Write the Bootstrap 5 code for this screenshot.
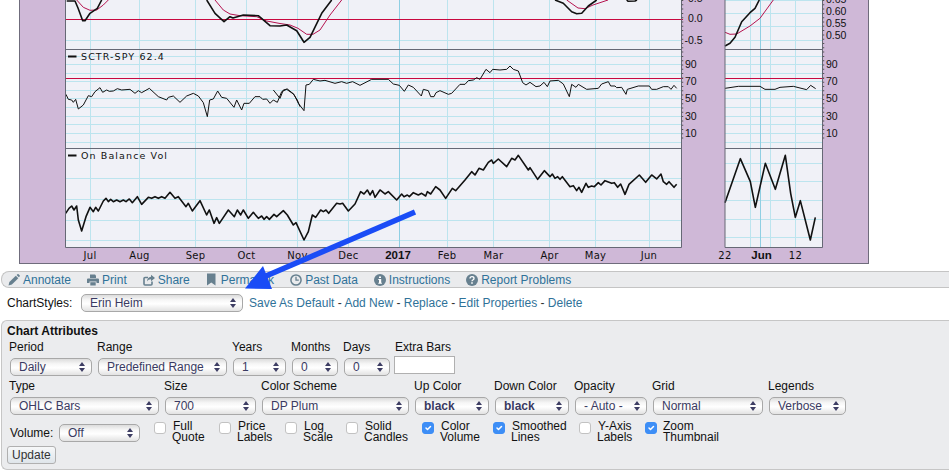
<!DOCTYPE html>
<html lang="en">
<head>
<meta charset="utf-8">
<title>Chart</title>
<link href="https://cdn.jsdelivr.net/npm/bootstrap@5.3.0/dist/css/bootstrap.min.css" rel="stylesheet">
<style>
html,body{height:472px;overflow:hidden;background:#fff}
body{font-family:"Liberation Sans",Arial,sans-serif;font-size:12px;line-height:14px;color:#111;position:relative}
.chartpic{display:block}
.chartpic text{font-family:"Liberation Sans",Arial,sans-serif;font-size:10.5px;fill:#111}
.chartpic text.wide{font-family:"DejaVu Sans",sans-serif;font-size:10px;letter-spacing:.3px}
.chartpic text.leg{font-family:"DejaVu Sans",sans-serif;font-size:9.5px;letter-spacing:1.1px}
.chartpic text.strong{font-family:"Liberation Sans",sans-serif;font-size:11.5px;font-weight:700}
.grid{stroke:#bce4ee;stroke-width:1;fill:none}
.gridd{stroke:#8fcfe3;stroke-width:1;fill:none}
.edge{stroke:#666875;stroke-width:1;fill:none}
.ln{fill:none;stroke:#111;stroke-linejoin:round;vector-effect:non-scaling-stroke}
.ln1{stroke-width:1}
.ln2{stroke-width:1.6}
.rd{fill:none;stroke:#b5134f;stroke-width:1;vector-effect:non-scaling-stroke}
.toolstrip{margin-top:7px;height:17px;margin-left:1px;border:1px solid #c4c4c4;border-right:0;border-radius:8px 0 0 8px;background:#eaebed;padding-left:6px;gap:16px}
.toolstrip a,.linkrow a{color:#2f7299;text-decoration:none}
.toolitem{gap:3px}
.toolitem svg{display:block;flex:none}
.toolitem .marksvg{margin-right:1px}
.stylesrow{margin-top:5px;height:20px;padding-left:7px}
.stylesrow label{width:73px}
.linkrow{margin-left:6px;color:#333}
.attrs{margin:7px 0 0 1px;height:150px;border:1px solid #c6c6c6;border-right:0;border-radius:6px 0 0 6px;background:#ebecee;padding:3px 0 0 5px}
.attrs h6{font-family:inherit;font-size:12px;line-height:14px;font-weight:700;margin:0 0 2px 0;color:#111}
.fieldrow{padding-left:2px}
.fieldrow.second{margin-top:3px}
.fieldrow .fld{display:flex;flex-direction:column}
.fld label{height:14px;margin-bottom:4px}
.fld.extra label{margin-bottom:2px}
.pickwrap{position:relative;display:block;margin-left:1px}
.pickwrap::before,.pickwrap::after{content:"";position:absolute;right:7px;border-left:3px solid transparent;border-right:3px solid transparent;pointer-events:none}
.pickwrap::before{top:4px;border-bottom:4px solid #3d3d63}
.pickwrap::after{top:10px;border-top:4px solid #3d3d63}
.form-select.pick{display:block;font-family:inherit;font-size:12px;line-height:14px;height:18px;min-height:0;padding:1px 14px 1px 8px;color:#3a3a62;border:1px solid #a8a8a8;border-radius:5px;box-shadow:none;background-color:#f4f4f4;background-image:linear-gradient(#dcdcdc,#f6f6f6 30%,#ffffff 55%,#e2e2e2);background-size:auto;background-position:0 0}
.form-select.pick.heavy{font-weight:700}
.form-control.barsbox{width:61px;height:18px;min-height:0;padding:0 2px;font-size:12px;border:1px solid #b0b0b0;border-radius:0;background:#fff;margin-left:-1px}
.wd88{width:88px}.wd135{width:135px}.wd59{width:59px}.wd52{width:52px}
.wd155{width:155px}.wd97{width:97px}.wd153{width:153px}.wd80{width:80px}.wd78{width:78px}.wd116{width:116px}
.sw82{width:82px}.sw129{width:129px}.sw53{width:53px}.sw46{width:46px}.sw149{width:149px}.sw91{width:91px}.sw147{width:147px}.sw74{width:74px}.sw72{width:72px}.sw110{width:110px}.sw77{width:77px}.sw81{width:81px}.sw162{width:162px}
.thirdrow{margin-top:5px;height:26px;padding-left:3px;color:#111}
.vollabel{width:47px;margin-top:6px}
.volwrap{margin:4px 0 0 1px;width:96px}
.vw65{width:65px}.vw66{width:66px}.vw61{width:61px}.vw76{width:76px}.vw71{width:71px}.vw86{width:86px}
.form-check-input.tick{width:12px;height:12px;margin:2px 6px 0 0;border:1px solid #c2c2c2;border-radius:3px;flex:none;float:none}
.form-check-input.tick:checked{background-color:#3d8ef6;border-color:#3d8ef6}
.ticktext{margin-top:1px;display:block;white-space:nowrap}
.ticktext span{display:block;line-height:11px}
.ticktext .firstline{padding-left:1px}
.btn.updatebtn{display:block;font-size:12px;line-height:13px;height:18px;padding:1px 4px;margin:0;color:#333;border:1px solid #b0b0b0;border-radius:3px;background:linear-gradient(#f7f8f9,#dfe5ea)}
.arrowover{position:absolute;left:0;top:0;pointer-events:none}
</style>
</head>
<body>
<svg class="chartpic" width="949" height="264" viewBox="0 0 949 264" xmlns="http://www.w3.org/2000/svg">
  <rect x="19.5" y="-5" width="849" height="268.5" fill="#cfb8d7" stroke="#6f6c7c"/>
  <rect x="65.5" y="-5" width="616" height="252.5" fill="#f0f1f7"/>
  <rect x="725" y="-5" width="97" height="252.5" fill="#f0f1f7"/>
  <path class="grid" d="M66 40.5H681M66 56.5H681M66 64.5H681M66 73.5H681M66 81.5H681M66 90.5H681M66 98.5H681M66 107.5H681M66 116.5H681M66 124.5H681M66 133.5H681M66 142.5H681M66 178.5H681M66 199.5H681M66 220.5H681M66 240.5H681"/>
  <path class="grid" d="M725 0.5H822M725 13.5H822M725 26.5H822M725 40.5H822M725 56.5H822M725 64.5H822M725 73.5H822M725 81.5H822M725 90.5H822M725 98.5H822M725 107.5H822M725 116.5H822M725 124.5H822M725 133.5H822M725 142.5H822M725 163.5H822M725 181.5H822M725 200.5H822M725 219.5H822M725 237.5H822"/>
  <path class="grid" d="M90.5 0V247M139.5 0V247M195.5 0V247M246.5 0V247M297.5 0V247M348.5 0V247M447.5 0V247M493.5 0V247M549.5 0V247M595.5 0V247M649.5 0V247M750.5 0V247M770.5 0V247M795.5 0V247"/>
  <path class="gridd" d="M399.5 0V247M760.5 0V247"/>
  <path d="M66 19.5H683M66 78.5H683M725 78.5H824" stroke="#c8083f" fill="none"/>
  <polyline class="rd" points="76.7,0 83.3,7.3 90,10.3 96.7,10 103.3,5 108.3,0"/>
  <polyline class="rd" points="215,0 223.3,10 230,14 240,15.7 256.7,16.7 266.7,21 280,23.5 290,25 298,28.3 306.7,34.3 313,34.3 320,30 330,15 341.7,0"/>
  <polyline class="rd" points="566.7,0 578,8 585,8.7 593,5 608,0"/>
  <polyline class="rd" points="725,32.3 730,34.3 736.7,34 750,26 760,18.3 773.3,0"/>
  <polyline class="ln ln2" points="66.7,1 75,1 78,8 82.7,20.7 85,20.7 90,13.3 97.3,8.3 101.7,0"/>
  <polyline class="ln ln2" points="206.7,0 215,13.3 224,21.7 230,16.7 233,18 243.3,15 258.3,15.7 270,25.7 280,26 286.7,25 296.7,30.7 304,42.3 310,37.3 321.7,13.3 331.7,0"/>
  <polyline class="ln ln2" points="555,0 563.3,3.3 571.7,11.7 576.7,13.7 581.7,13.3 588.3,6 596.7,0"/>
  <polyline class="ln ln2" points="626.7,0 628,1.3 635,1 637,0"/>
  <polyline class="ln ln2" points="725,46 730,43.3 735,37.3 741.7,21.7 750,12.7 755,8.3 759.3,0"/>
  <g transform="translate(60 0) scale(.33333)"><polyline class="ln ln1" points="18,283 25,298 35,300 40,307 47,298 55,327 70,315 85,287 95,290 105,275 120,263 128,277 140,270 148,274 160,273 172,266 185,270 210,268 225,280 235,272 245,278 268,265 295,290 320,300 325,292 340,288 360,307 380,288 400,280 415,288 430,308 442,350 449,300 460,297 473,273 485,292 500,295 522,322 530,300 545,330 552,310 568,310 585,290 600,290 608,298 620,297 630,310 640,300 652,307 665,275 680,268 700,282 712,300 720,320"/></g>
  <g transform="translate(280 0) scale(.33333)"><polyline class="ln ln1" points="-20,270 0,295 10,270 22,267 42,283 55,310 72,332 78,255 88,253 100,238 120,243 135,241 165,250 185,245 200,250 218,245 240,256 275,238 325,238 340,252 358,256 373,274 385,255 400,262 424,288 430,268 445,272 452,290 462,290 468,278 480,272 505,283 515,280 540,253 555,253 565,242 580,240 590,233 600,238 618,208 630,218 638,208 660,210"/></g>
  <g transform="translate(500 0) scale(.33333)"><polyline class="ln ln1" points="0,210 20,208 30,198 40,208 55,213 68,248 78,255 90,247 108,260 120,258 132,247 142,260 150,243 175,241 190,252 208,290 215,253 228,262 235,253 260,268 295,265 305,252 325,245 332,258 345,258 350,263 365,262 378,283 382,268 415,258 448,258 455,268 470,268 490,260 505,260 513,268 522,256 530,265"/></g>
  <g transform="translate(475 0) scale(.33333)"><polyline class="ln ln1" points="750,265 790,259 855,259 870,268 900,268 915,262 955,259 995,269 1007,256 1022,266"/></g>
  <g transform="scale(.33333)"><polyline class="ln ln2" points="197,640 207,625 215,618 222,630 230,618 235,660 245,693 258,650 270,622 280,635 287,622 295,633 310,603 318,595 325,605 332,598 340,605 350,600 360,605 370,600 378,605 388,597 397,608 412,590 425,613 445,592 455,595 465,590 475,595 485,590 495,595 510,577 525,595 535,590 558,620 565,610 577,633 600,602 620,645 628,630 642,670 650,653 658,670 685,630 703,650 712,630 722,645 730,630 745,655 760,637 775,655 785,648 792,658 800,650 808,658 822,643 830,650 850,632 862,645 880,675 888,668 912,720 925,695 937,645 947,652 962,630 970,635 978,630 986,640 1010,610 1020,612 1028,610 1045,633 1065,612 1082,575 1092,582 1102,570 1110,585 1118,572 1125,592 1140,570 1155,582 1165,575 1190,600 1205,582 1212,590 1222,585 1228,590 1240,578 1255,585 1265,580 1277,588 1282,575 1292,582 1307,560 1320,570 1337,595 1357,565 1367,572 1395,540 1415,515 1425,525 1437,505 1450,510 1465,487 1475,480 1480,490 1495,477 1520,500 1535,475 1545,480 1555,466 1585,510 1590,503 1613,538 1633,512 1650,530 1657,522 1665,535 1673,530 1680,538 1687,530 1710,560 1720,557 1730,572 1737,562 1745,577 1758,550 1765,562 1775,558 1783,560 1795,548 1803,555 1815,542 1835,550 1843,548 1853,562 1862,552 1875,583 1887,553 1918,525 1937,547 1955,525 1970,537 1983,522 1990,545 2000,553 2007,545 2022,562 2030,553"/></g>
  <g transform="translate(475 0) scale(.33333)"><polyline class="ln ln2" points="750,608 796,476 826,545 841,622 871,490 901,568 931,466 947,580 961,652 976,602 1006,720 1021,652"/></g>
  <path class="edge" d="M65.5 -5V247.5H681.5V-5M65 49.5H682M65 148.5H682M725 -5V247.5H822.5V-5M725 49.5H822.5M725 148.5H822.5"/>
  <path d="M682.5 0V142M823.5 0V142" stroke="#555" stroke-width="1.5" stroke-dasharray="1 3.3" fill="none"/>
  <path d="M68 56.5H76.5M68 155.5H76.5" stroke="#111" stroke-width="2"/>
  <text class="leg" x="81" y="60">SCTR-SPY 62.4</text>
  <text class="leg" x="81" y="159">On Balance Vol</text>
  <text x="688" y="2">0.5</text><text x="688" y="22">0.0</text><text x="684.5" y="43.5">-0.5</text>
  <text x="685" y="68">90</text><text x="685" y="85">70</text><text x="685" y="102">50</text><text x="685" y="119.5">30</text><text x="685" y="136.5">10</text>
  <text x="826" y="3">0.65</text><text x="826" y="15">0.60</text><text x="826" y="27">0.55</text><text x="826" y="39">0.50</text>
  <text x="826" y="68">90</text><text x="826" y="85">70</text><text x="826" y="102">50</text><text x="826" y="119.5">30</text><text x="826" y="136.5">10</text>
  <g text-anchor="middle">
    <text class="wide" x="90" y="259">Jul</text><text class="wide" x="139.5" y="259">Aug</text><text class="wide" x="195.5" y="259">Sep</text><text class="wide" x="246.5" y="259">Oct</text><text class="wide" x="297.5" y="259">Nov</text><text class="wide" x="348.5" y="259">Dec</text>
    <text class="strong" x="398" y="259">2017</text>
    <text class="wide" x="447" y="259">Feb</text><text class="wide" x="493.5" y="259">Mar</text><text class="wide" x="549.5" y="259">Apr</text><text class="wide" x="595.5" y="259">May</text><text class="wide" x="649" y="259">Jun</text>
    <text class="wide" x="725" y="259">22</text><text class="strong" x="761.5" y="259">Jun</text><text class="wide" x="795.5" y="259">12</text>
  </g>
</svg>

<nav class="toolstrip d-flex align-items-center">
  <a class="toolitem d-flex align-items-center" href="#"><svg width="12" height="12" viewBox="0 0 12 12"><path d="M0.5 11.500l.9-3.400 6.400-6.400 2.500 2.500-6.400 6.400z" fill="#67808f"/><path d="M8.600 1l.8-.7a.9.9 0 0 1 1.200 0l1 1a.9.9 0 0 1 0 1.200l-.8.8z" fill="#67808f"/></svg><span>Annotate</span></a>
  <a class="toolitem d-flex align-items-center" href="#"><svg width="12" height="12" viewBox="0 0 12 12"><path d="M3 .5h5l1 1V4H3z" fill="#67808f"/><path d="M0 5.500q0-1 1-1h10q1 0 1 1V9H9.500V7.500h-7V9H0z" fill="#67808f"/><path d="M3.300 8.200h5.400v3.300H3.300z" fill="#67808f"/></svg><span>Print</span></a>
  <a class="toolitem d-flex align-items-center" href="#"><svg width="12" height="12" viewBox="0 0 12 12"><path d="M9 7.500V10q0 1-1 1H2q-1 0-1-1V4.500q0-1 1-1h3" fill="none" stroke="#67808f" stroke-width="1.600"/><path d="M8 .8L12 4 8 7.300V5.200C6 5.200 5 6 4 7.500 4 5 5.500 3 8 2.800z" fill="#67808f"/></svg><span>Share</span></a>
  <a class="toolitem d-flex align-items-center" href="#"><svg class="marksvg" width="11" height="13" viewBox="0 0 11 13"><path d="M1 .5h8.500V12.500L5.250 9.500 1 12.500z" fill="#67808f"/></svg><span>Permalink</span></a>
  <a class="toolitem d-flex align-items-center" href="#"><svg width="12" height="12" viewBox="0 0 12 12"><circle cx="6" cy="6" r="5.100" fill="none" stroke="#67808f" stroke-width="1.500"/><path d="M6 2.800V6.200H8.800" fill="none" stroke="#67808f" stroke-width="1.300"/></svg><span>Past Data</span></a>
  <a class="toolitem d-flex align-items-center" href="#"><svg width="12" height="12" viewBox="0 0 12 12"><circle cx="6" cy="6" r="6" fill="#67808f"/><path d="M5 2.400h2v1.700H5zM4.300 5h2.900v3.800h.7v1H4.300v-1H5V6H4.300z" fill="#fff"/></svg><span>Instructions</span></a>
  <a class="toolitem d-flex align-items-center" href="#"><svg width="12" height="12" viewBox="0 0 12 12"><circle cx="6" cy="6" r="6" fill="#67808f"/><path d="M4 4.600Q4 2.700 6 2.700T8 4.400Q8 5.400 6.800 6 6 6.400 6 7.300" fill="none" stroke="#fff" stroke-width="1.300"/><path d="M5.200 8.300h1.600v1.500H5.200z" fill="#fff"/></svg><span>Report Problems</span></a>
</nav>

<div class="stylesrow d-flex align-items-center">
  <label for="styleSel">ChartStyles:</label>
  <span class="pickwrap sw162"><select id="styleSel" class="form-select pick"><option>Erin Heim</option></select></span>
  <span class="linkrow"><a href="#">Save As Default</a> - <a href="#">Add New</a> - <a href="#">Replace</a> - <a href="#">Edit Properties</a> - <a href="#">Delete</a></span>
</div>

<form class="attrs">
  <h6>Chart Attributes</h6>
  <div class="fieldrow d-flex">
    <div class="fld wd88"><label>Period</label><span class="pickwrap sw82"><select class="form-select pick"><option>Daily</option></select></span></div>
    <div class="fld wd135"><label>Range</label><span class="pickwrap sw129"><select class="form-select pick"><option>Predefined Range</option></select></span></div>
    <div class="fld wd59"><label>Years</label><span class="pickwrap sw53"><select class="form-select pick"><option>1</option></select></span></div>
    <div class="fld wd52"><label>Months</label><span class="pickwrap sw46"><select class="form-select pick"><option>0</option></select></span></div>
    <div class="fld wd52"><label>Days</label><span class="pickwrap sw46"><select class="form-select pick"><option>0</option></select></span></div>
    <div class="fld extra"><label>Extra Bars</label><input class="form-control barsbox" type="text"></div>
  </div>
  <div class="fieldrow second d-flex">
    <div class="fld wd155"><label>Type</label><span class="pickwrap sw149"><select class="form-select pick"><option>OHLC Bars</option></select></span></div>
    <div class="fld wd97"><label>Size</label><span class="pickwrap sw91"><select class="form-select pick"><option>700</option></select></span></div>
    <div class="fld wd153"><label>Color Scheme</label><span class="pickwrap sw147"><select class="form-select pick"><option>DP Plum</option></select></span></div>
    <div class="fld wd80"><label>Up Color</label><span class="pickwrap sw74"><select class="form-select pick heavy"><option>black</option></select></span></div>
    <div class="fld wd80"><label>Down Color</label><span class="pickwrap sw74"><select class="form-select pick heavy"><option>black</option></select></span></div>
    <div class="fld wd78"><label>Opacity</label><span class="pickwrap sw72"><select class="form-select pick"><option>- Auto -</option></select></span></div>
    <div class="fld wd116"><label>Grid</label><span class="pickwrap sw110"><select class="form-select pick"><option>Normal</option></select></span></div>
    <div class="fld"><label>Legends</label><span class="pickwrap sw77"><select class="form-select pick"><option>Verbose</option></select></span></div>
  </div>
  <div class="thirdrow d-flex">
    <label class="vollabel">Volume:</label>
    <span class="volwrap"><span class="pickwrap sw81"><select class="form-select pick"><option>Off</option></select></span></span>
    <div class="vw65 d-flex"><input class="form-check-input tick" type="checkbox"><span class="ticktext"><span class="firstline">Full</span><span>Quote</span></span></div>
    <div class="vw66 d-flex"><input class="form-check-input tick" type="checkbox"><span class="ticktext"><span class="firstline">Price</span><span>Labels</span></span></div>
    <div class="vw61 d-flex"><input class="form-check-input tick" type="checkbox"><span class="ticktext"><span class="firstline">Log</span><span>Scale</span></span></div>
    <div class="vw76 d-flex"><input class="form-check-input tick" type="checkbox"><span class="ticktext"><span class="firstline">Solid</span><span>Candles</span></span></div>
    <div class="vw71 d-flex"><input class="form-check-input tick" type="checkbox" checked><span class="ticktext"><span class="firstline">Color</span><span>Volume</span></span></div>
    <div class="vw86 d-flex"><input class="form-check-input tick" type="checkbox" checked><span class="ticktext"><span class="firstline">Smoothed</span><span>Lines</span></span></div>
    <div class="vw66 d-flex"><input class="form-check-input tick" type="checkbox"><span class="ticktext"><span class="firstline">Y-Axis</span><span>Labels</span></span></div>
    <div class="d-flex"><input class="form-check-input tick" type="checkbox" checked><span class="ticktext"><span>Zoom</span><span>Thumbnail</span></span></div>
  </div>
  <button type="button" class="btn updatebtn">Update</button>
</form>

<svg class="arrowover" width="949" height="472" viewBox="0 0 949 472" xmlns="http://www.w3.org/2000/svg">
  <path d="M415 212L266 276" stroke="#1a4cf6" stroke-width="5.500" fill="none"/>
  <path d="M245 288.500L263 266 272 289z" fill="#1a4cf6"/>
</svg>
<script src="https://cdn.jsdelivr.net/npm/bootstrap@5.3.0/dist/js/bootstrap.bundle.min.js"></script>
</body>
</html>
